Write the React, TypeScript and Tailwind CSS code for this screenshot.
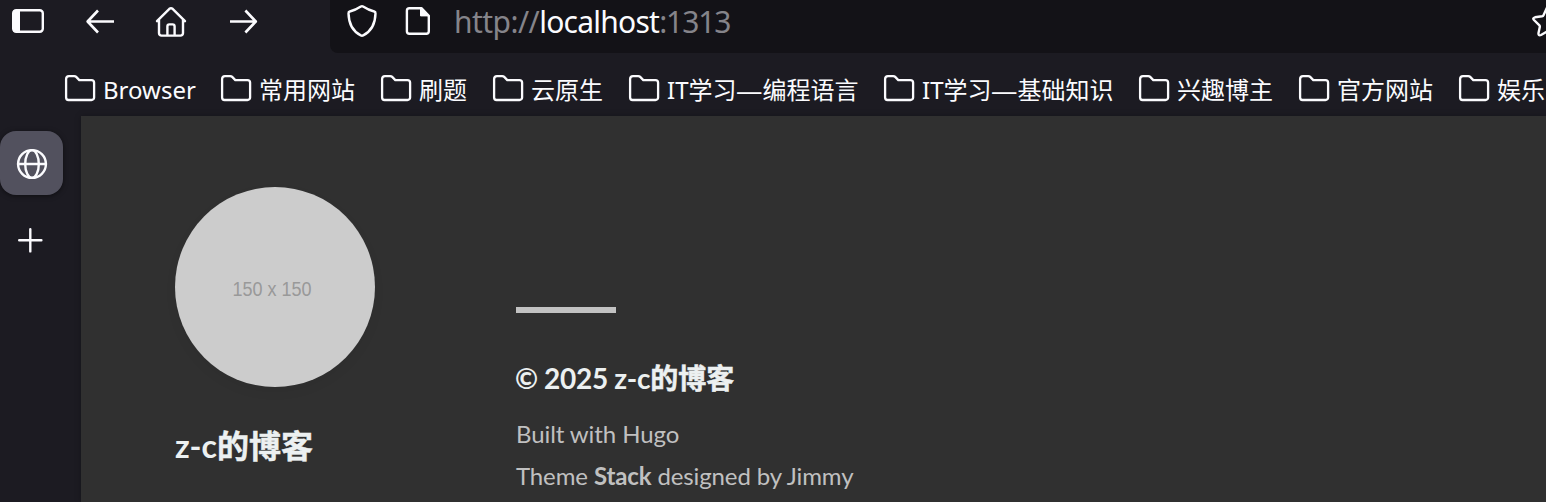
import React from "react";

const stroke = {
  fill: "none",
  stroke: "#fbfbfe",
  strokeWidth: 2.4,
  strokeLinecap: "round",
  strokeLinejoin: "round",
} as const;

function FolderIcon() {
  return (
    <svg width="31" height="26" viewBox="0 0 31 26" className="shrink-0 overflow-visible" {...stroke} strokeWidth={2.3}>
      <path d="M4 1.1H9.2C10 1.1 10.7 1.4 11.2 1.9L14.3 5.1H26.5A2.6 2.6 0 0 1 29.1 7.6V22.4A2.6 2.6 0 0 1 26.5 25H3.6A2.6 2.6 0 0 1 1.1 22.4V4A3 3 0 0 1 4 1.1Z" />
    </svg>
  );
}

const bookmarks = [
  { parts: ["Browser"], cell: "w-[156px]" },
  { parts: ["常用网站"], cell: "w-[160px]" },
  { parts: ["刷题"], cell: "w-[112px]" },
  { parts: ["云原生"], cell: "w-[136px]" },
  { parts: ["IT学习", "—", "编程语言"], cell: "w-[255px]" },
  { parts: ["IT学习", "—", "基础知识"], cell: "w-[255px]" },
  { parts: ["兴趣博主"], cell: "w-[160px]" },
  { parts: ["官方网站"], cell: "w-[160px]" },
  { parts: ["娱乐"], cell: "w-[87px]" },
];

function NavigationBar() {
  return (
    <header className="flex h-[53px] shrink-0">
      <nav className="flex h-[42px] w-[330px] shrink-0 items-center pl-[11px]">
        <svg width="34" height="26" viewBox="0 0 34 26" {...stroke}>
          <rect x="2.2" y="2.2" width="29.6" height="21.6" rx="3" />
          <path d="M4 2H9V24H4A2 2 0 0 1 2 22V4A2 2 0 0 1 4 2Z" fill="#fbfbfe" stroke="none" />
        </svg>
        <svg width="32" height="30" viewBox="0 0 32 30" className="ml-[39px]" {...stroke} strokeWidth={2.6}>
          <path d="M30 15.5H4M14 4.5 3.6 15.5 14 26.5" strokeLinecap="butt" />
        </svg>
        <svg width="32" height="32" viewBox="0 0 32 32" className="ml-[39px]" {...stroke}>
          <path d="M2 16.2 14.4 3.8Q16 2.6 17.6 3.8L30 16.2M4 14.6V28A2.5 2.5 0 0 0 6.5 30.6H25.5A2.5 2.5 0 0 0 28 28V14.6M12.4 30V21.4A2 2 0 0 1 14.4 19.4H17.6A2 2 0 0 1 19.6 21.4V30" />
        </svg>
        <svg width="32" height="30" viewBox="0 0 32 30" className="ml-[41px]" {...stroke} strokeWidth={2.6}>
          <path d="M2 15.5H28M17.4 4.5 27.8 15.5 17.4 26.5" strokeLinecap="butt" />
        </svg>
      </nav>
      <div className="flex h-[53px] flex-1 items-start overflow-hidden rounded-bl-lg bg-[#131217]">
        <svg width="32" height="34" viewBox="0 0 32 34" className="ml-4 mt-1 shrink-0" {...stroke}>
          <path d="M14.9 2.6Q16 1.9 17.1 2.6Q22.7 6.3 28.2 7.5Q29.6 7.9 29.5 9.4C29.3 18.7 26.8 26.5 17.2 31.4Q16 32 14.8 31.4C5.2 26.5 2.7 18.7 2.5 9.4Q2.4 7.9 3.8 7.5Q9.3 6.3 14.9 2.6Z" />
        </svg>
        <svg width="26" height="30" viewBox="0 0 26 30" className="ml-[27px] mt-[6px] shrink-0" {...stroke}>
          <path d="M4.4 2.2H16.4L23.8 9.8V25.3A2.5 2.5 0 0 1 21.3 27.8H4.4A2.5 2.5 0 0 1 1.9 25.3V4.7A2.5 2.5 0 0 1 4.4 2.2Z" />
          <path d="M15.5 2V9.9H24Z" fill="#fbfbfe" stroke="#fbfbfe" strokeWidth="1" />
        </svg>
        <div className="ml-[23px] flex h-[42px] w-[276px] items-center whitespace-pre font-['Noto_Sans','Open_Sans',sans-serif] text-[30px] text-[#85848a]">
          <span className="tracking-[-0.55px]">http://</span>
          <span className="tracking-[-0.75px] text-[#fbfbfe]">localhost</span>
          <span className="tracking-[-1.1px]">:1313</span>
        </div>
        <div className="flex-1" />
        <svg width="15" height="36" viewBox="0 0 15 36" className="mt-1 shrink-0" {...stroke}>
          <path d="M18 3Q16.8 2.2 15.8 4L12.5 11.2Q12.1 12.1 11 12.3L4 13.3Q1.2 14 3 16L8.2 21.2Q9 22 8.8 23L7.5 29Q7.2 32.2 10 31L18 26.5" />
        </svg>
      </div>
    </header>
  );
}

function BookmarksBar() {
  return (
    <div className="flex h-[63px] shrink-0 overflow-hidden pl-[65px] pt-[21px] font-['Noto_Sans','Noto_Sans_CJK_SC',sans-serif] text-[24px] leading-[32px] text-[#fbfbfe]">
      {bookmarks.map((b) => (
        <div key={b.parts.join("")} className={`flex shrink-0 items-start whitespace-nowrap ${b.cell}`}>
          <div className="mt-px shrink-0">
            <FolderIcon />
          </div>
          <span className="ml-[7px]">
            {b.parts.map((part) =>
              part === "—" ? (
                <span key={part} className="inline-block w-[26px] origin-left scale-x-110">
                  {part}
                </span>
              ) : (
                part
              ),
            )}
          </span>
        </div>
      ))}
    </div>
  );
}

function TabStrip() {
  return (
    <aside className="flex w-[81px] shrink-0 flex-col pt-[15px]">
      <div className="flex h-16 w-[63px] items-center justify-center rounded-2xl bg-[#52515e] shadow-[0_1px_5px_rgba(0,0,0,0.5)]">
        <svg width="32" height="32" viewBox="0 0 32 32" className="ml-px mt-[2px]" {...stroke}>
          <circle cx="16" cy="16" r="13.9" />
          <ellipse cx="16" cy="16" rx="6.8" ry="13.9" />
          <path d="M2 16H30" />
        </svg>
      </div>
      <svg width="26" height="26" viewBox="0 0 26 26" className="ml-[17px] mt-[32px]" {...stroke}>
        <path d="M13.3 2.2V24.4M2.2 13.3H24.4" />
      </svg>
    </aside>
  );
}

function Page() {
  return (
    <main className="flex flex-1 bg-[#303030] font-['Lato','Noto_Sans_CJK_SC',sans-serif] shadow-[0_0_6px_rgba(0,0,0,0.25)]">
      <section className="w-[435px] shrink-0 pl-[94px] pt-[71px]">
        <div className="flex size-[200px] items-center justify-center rounded-full bg-[#cccccc] shadow-[0_5px_12px_rgba(0,0,0,0.05)]">
          <span className="-ml-[6px] mt-[3px] scale-x-90 whitespace-nowrap font-['Liberation_Sans',sans-serif] text-[20px] leading-6 text-[#999999]">
            150 x 150
          </span>
        </div>
        <h1 className="mt-[35px] whitespace-nowrap text-[32px] font-bold leading-[48px] text-[#ecf0f1]">
          z-c<span className="[-webkit-text-stroke:0.5px_#ecf0f1]">的博客</span>
        </h1>
      </section>
      <footer className="flex-1 whitespace-nowrap pt-[191px] text-[24px] text-[#c0c0c0]">
        <div className="h-[6px] w-[100px] bg-[#c2c2c2]" />
        <h2 className="-ml-px mt-[44px] text-[28px] font-bold leading-[42px] tracking-[-0.2px] text-[#ecf0f1] [word-spacing:-0.5px]">
          © 2025 z-c<span className="tracking-normal [-webkit-text-stroke:0.5px_#ecf0f1]">的博客</span>
        </h2>
        <p className="mt-[14px] leading-[42px] tracking-[-0.08px]">Built with Hugo</p>
        <p className="leading-[42px] tracking-[-0.12px]">
          Theme <b>Stack</b> designed by Jimmy
        </p>
      </footer>
    </main>
  );
}

export default function App() {
  return (
    <div className="flex h-[502px] w-[1546px] flex-col overflow-hidden bg-[#1c1b22]">
      <NavigationBar />
      <BookmarksBar />
      <div className="flex h-[386px]">
        <TabStrip />
        <Page />
      </div>
    </div>
  );
}
